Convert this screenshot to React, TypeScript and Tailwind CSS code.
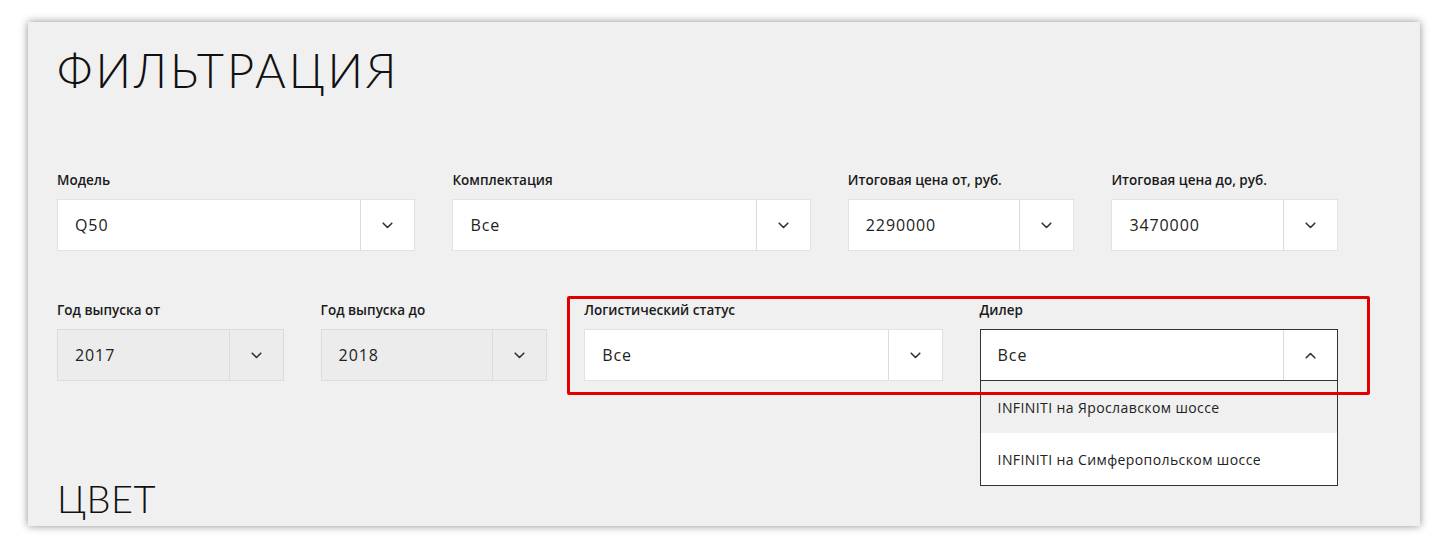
import { ReactNode } from "react";

const font = { fontFamily: '"Open Sans", "Noto Sans", sans-serif' };
const headFont = { fontFamily: '"Lato", "Noto Sans", sans-serif' };

function Chevron({ up = false }: { up?: boolean }) {
  return (
    <svg width="11" height="7" viewBox="0 0 11 7" fill="none" className="text-[#333]">
      <path
        d={up ? "M1.2 5.8 L5.5 1.5 L9.8 5.8" : "M1.2 1.2 L5.5 5.5 L9.8 1.2"}
        stroke="currentColor"
        strokeWidth="1.6"
        strokeLinecap="round"
        strokeLinejoin="round"
      />
    </svg>
  );
}

interface SelectProps {
  label: string;
  value: string;
  span: string;
  disabled?: boolean;
  open?: boolean;
  children?: ReactNode;
}

function Select({ label, value, span, disabled = false, open = false, children }: SelectProps) {
  const box = open
    ? "border-[#333] bg-white"
    : disabled
    ? "border-[#dcdcdc] bg-[#ececec]"
    : "border-[#e2e2e2] bg-white";
  return (
    <div className={`${span} relative`}>
      <div className="text-[13.5px] leading-[18px] text-[#1a1a1a] font-semibold mb-[10px] h-[18px]">{label}</div>
      <div className={`flex h-[52px] border ${box}`}>
        <div className="flex-1 flex items-center pl-[17px] text-[16px] tracking-[0.9px] text-[#222]">{value}</div>
        <div className="w-[54px] flex items-center justify-center border-l border-[#dcdcdc]">
          <Chevron up={open} />
        </div>
      </div>
      {children}
    </div>
  );
}

export default function App() {
  return (
    <div className="w-[1450px] h-[555px] bg-white pt-[22px] pl-[28px] relative" style={font}>
      <div className="w-[1392px] h-[504px] bg-[#f0f0f0] shadow-[0_0_8px_rgba(0,0,0,0.45)] pl-[29px] pt-[24px] overflow-hidden">
        <h1 className="text-[47px] leading-[48px] font-light tracking-[3px] text-[#111]" style={headFont}>ФИЛЬТРАЦИЯ</h1>
        <div className="w-[1281px] grid grid-cols-10 gap-x-[37px] gap-y-[50px] mt-[77px]">
          <Select label="Модель" value="Q50" span="col-span-3" />
          <Select label="Комплектация" value="Все" span="col-span-3" />
          <Select label="Итоговая цена от, руб." value="2290000" span="col-span-2" />
          <Select label="Итоговая цена до, руб." value="3470000" span="col-span-2" />
          <Select label="Год выпуска от" value="2017" span="col-span-2" disabled />
          <Select label="Год выпуска до" value="2018" span="col-span-2" disabled />
          <Select label="Логистический статус" value="Все" span="col-span-3" />
          <Select label="Дилер" value="Все" span="col-span-3" open>
            <div className="absolute left-0 right-0 top-[80px] border border-t-0 border-[#333] bg-white text-[14px] tracking-[0.4px] text-[#222] font-medium">
              <div className="h-[52px] flex items-center pl-[17px] bg-[#f0f0f0]">INFINITI на Ярославском шоссе</div>
              <div className="h-[52px] flex items-center pl-[17px]">INFINITI на Симферопольском шоссе</div>
            </div>
          </Select>
        </div>
        <h2 className="mt-[97px] text-[38px] leading-[40px] font-light tracking-[0.5px] text-[#111]" style={headFont}>ЦВЕТ</h2>
      </div>
      <div className="absolute left-[567px] top-[296px] w-[803px] h-[99px] border-[3px] border-[#e00000] rounded-[2px] pointer-events-none" />
    </div>
  );
}
